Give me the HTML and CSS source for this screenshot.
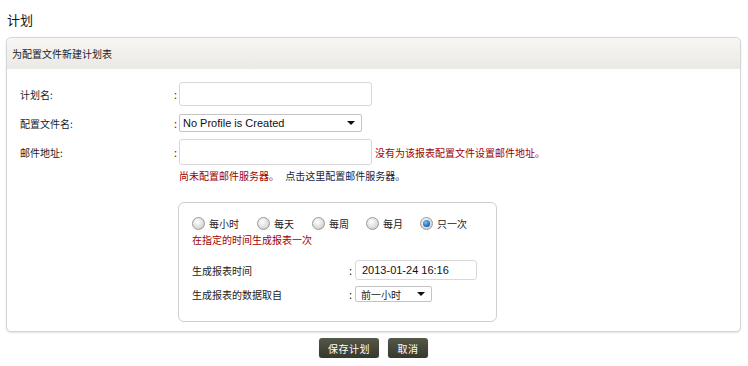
FILE: index.html
```html
<!DOCTYPE html>
<html lang="zh-CN">
<head>
    <meta charset="UTF-8">
    <meta name="viewport" content="width=device-width, initial-scale=1.0">
    <title>计划</title>
    <link rel="stylesheet" href="styles.css">
</head>
<body>
    <h1 class="page-title">计划</h1>

    <div class="panel-wrap">
        <div class="panel">
            <div class="panel-head">为配置文件新建计划表</div>
            <div class="panel-body">
                <div class="row">
                    <label class="label" for="planName">计划名:</label>
                    <span class="colon">:</span>
                    <input id="planName" class="text-input" type="text">
                </div>
                <div class="row row-select">
                    <label class="label" for="profile">配置文件名:</label>
                    <span class="colon">:</span>
                    <div class="select select-wide">
                        <span class="select-text latin">No Profile is Created</span>
                        <span class="caret"></span>
                    </div>
                </div>
                <div class="row row-mail">
                    <label class="label" for="mail">邮件地址:</label>
                    <span class="colon">:</span>
                    <input id="mail" class="text-input text-input-tall" type="text">
                    <span class="error">没有为该报表配置文件设置邮件地址。</span>
                </div>
                <div class="note">
                    <span class="error">尚未配置邮件服务器。</span>
                    <a class="link" href="#">点击这里配置邮件服务器。</a>
                </div>

                <div class="schedule">
                    <div class="radios">
                        <label class="radio"><input type="radio" name="freq"><span>每小时</span></label>
                        <label class="radio"><input type="radio" name="freq"><span>每天</span></label>
                        <label class="radio"><input type="radio" name="freq"><span>每周</span></label>
                        <label class="radio"><input type="radio" name="freq"><span>每月</span></label>
                        <label class="radio"><input type="radio" name="freq" checked><span>只一次</span></label>
                    </div>
                    <div class="error hint">在指定的时间生成报表一次</div>

                    <div class="srow srow-time">
                        <span class="slabel">生成报表时间</span>
                        <span class="scolon">:</span>
                        <input class="text-input time-input latin" type="text" value="2013-01-24 16:16">
                    </div>
                    <div class="srow">
                        <span class="slabel">生成报表的数据取自</span>
                        <span class="scolon">:</span>
                        <div class="select select-small">
                            <span class="select-text">前一小时</span>
                            <span class="caret"></span>
                        </div>
                    </div>
                </div>
            </div>
        </div>
    </div>

    <div class="actions">
        <button class="btn btn-save">保存计划</button>
        <button class="btn btn-cancel">取消</button>
    </div>
</body>
</html>
```

FILE: styles.css
```css
* {
    margin: 0;
    padding: 0;
    box-sizing: border-box;
}

body {
    font-family: "Noto Sans CJK SC", "Liberation Sans", sans-serif;
    font-size: 10px;
    color: #222;
    background: #fff;
    width: 748px;
}

.latin {
    font-family: "Liberation Sans", "Noto Sans CJK SC", sans-serif;
}

.page-title {
    font-size: 13px;
    font-weight: normal;
    color: #111;
    height: 37px;
    line-height: 20px;
    padding: 10px 0 0 7px;
}

.panel-wrap {
    height: 295px;
}

.panel {
    margin: 0 7px 0 6px;
    height: 295px;
    border: 1px solid #d6d6d6;
    border-radius: 5px;
    background: #fff;
    box-shadow: 0 1px 2px rgba(0, 0, 0, 0.12);
}

.panel-head {
    height: 31px;
    line-height: 32px;
    padding-left: 5px;
    font-size: 10px;
    color: #222;
    border-radius: 5px 5px 0 0;
    background: linear-gradient(#f7f6f4, #ebe9e5);
}

.panel-body {
    padding: 13px 0 0 13px;
}

.row {
    display: flex;
    align-items: center;
    height: 24px;
}

.row-select {
    margin-top: 8px;
    height: 18px;
}

.row-mail {
    margin-top: 7px;
    height: 26px;
}

.label {
    width: 154px;
    color: #222;
}

.colon {
    width: 5px;
    color: #b00000;
    font-size: 11px;
}

.text-input {
    width: 193px;
    height: 24px;
    border: 1px solid #d8d8d8;
    border-radius: 3px;
    background: #fff;
    outline: none;
}

.text-input-tall {
    height: 26px;
}

.error {
    color: #a00000;
}

.row-mail .error {
    margin-left: 3px;
}

.select {
    display: flex;
    align-items: center;
    justify-content: space-between;
    height: 18px;
    border: 1px solid #c4c4c4;
    border-radius: 2px;
    background: #fff;
    padding: 0 6px 0 3px;
}

.select-wide {
    width: 183px;
}

.select-wide .select-text {
    font-size: 11px;
    color: #111;
}

.caret {
    width: 0;
    height: 0;
    border-left: 4px solid transparent;
    border-right: 4px solid transparent;
    border-top: 4px solid #111;
}

.note {
    margin: 2px 0 0 159px;
    height: 18px;
    line-height: 18px;
}

.link {
    color: #1a1a40;
    text-decoration: none;
    margin-left: 4px;
}

.schedule {
    margin: 17px 0 0 158px;
    width: 319px;
    height: 120px;
    border: 1px solid #cfcfcf;
    border-radius: 6px;
    padding: 12px 0 0 13px;
}

.radios {
    display: flex;
    align-items: center;
    height: 16px;
}

.radio {
    display: flex;
    align-items: center;
    margin-right: 18px;
}

.radio:nth-child(3),
.radio:nth-child(4) {
    margin-right: 17px;
}

.radio input {
    appearance: none;
    width: 13px;
    height: 13px;
    border-radius: 50%;
    border: 1px solid #9a9a9a;
    background: radial-gradient(circle at 40% 35%, #ffffff, #dcdcdc 60%, #bdbdbd);
    margin-right: 4px;
    position: relative;
}

.radio input:checked::after {
    content: "";
    position: absolute;
    left: 2px;
    top: 2px;
    width: 7px;
    height: 7px;
    border-radius: 50%;
    background: radial-gradient(circle at 40% 35%, #6fc2ff, #1266b0 70%, #0a3f78);
}

.hint {
    margin-top: 2px;
    height: 14px;
    line-height: 14px;
}

.srow {
    display: flex;
    align-items: center;
    margin-top: 6px;
    height: 16px;
}

.srow-time {
    margin-top: 13px;
    height: 20px;
}

.slabel {
    width: 157px;
}

.scolon {
    width: 6px;
    font-size: 11px;
}

.time-input {
    width: 122px;
    height: 20px;
    padding-left: 6px;
    font-size: 11px;
    color: #111;
}

.select-small {
    width: 77px;
    height: 16px;
    padding-left: 5px;
}

.actions {
    display: flex;
    justify-content: center;
    gap: 9px;
    margin-top: 6px;
    padding-right: 1px;
}

.btn {
    height: 20px;
    border: none;
    border-radius: 3px;
    color: #fff;
    font-family: "Noto Sans CJK SC", sans-serif;
    font-size: 10px;
    letter-spacing: 0.5px;
    background: linear-gradient(#555747, #36382c);
    box-shadow: 0 1px 1px rgba(0, 0, 0, 0.3);
    cursor: pointer;
}

.btn-save {
    width: 60px;
}

.btn-cancel {
    width: 40px;
}
```
